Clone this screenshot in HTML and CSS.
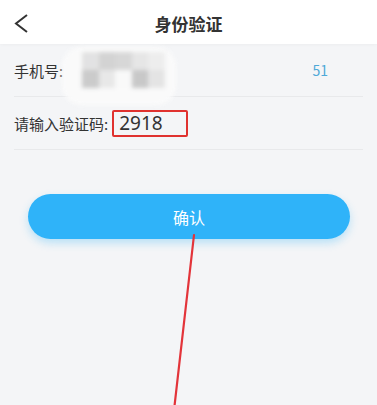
FILE: index.html
```html
<!DOCTYPE html>
<html lang="zh-CN">
<head>
    <meta charset="UTF-8">
    <meta name="viewport" content="width=device-width, initial-scale=1.0">
    <title>身份验证</title>
    <link rel="stylesheet" href="styles.css">
</head>
<body>
    <div class="header">
        <svg class="back" width="44" height="44" viewBox="0 0 44 44">
            <polyline points="27,15 16,23.5 27,32" fill="none" stroke="#333" stroke-width="2" stroke-linejoin="miter"/>
        </svg>
        <div class="title">身份验证</div>
        <div></div>
    </div>

    <div class="form">
        <div class="row phone">
            <span class="label">手机号:</span>
            <div class="mosaic">
                <span class="b1"></span><span class="b2"></span><span class="b3"></span><span class="b4"></span><span class="b5"></span>
                <span class="b6"></span><span class="b7"></span><span class="b8"></span><span class="b9"></span><span class="b10"></span>
            </div>
            <span class="tail">51</span>
        </div>
        <div class="row">
            <span class="label">请输入验证码:</span>
            <span class="code">2918</span>
        </div>
    </div>

    <div class="actions">
        <button class="confirm">确认</button>
    </div>

    <!-- 标注箭头线 -->
    <svg class="mark" width="377" height="405" viewBox="0 0 377 405">
        <line x1="194" y1="235" x2="174.5" y2="406" stroke="#e3343a" stroke-width="2.2" stroke-linecap="round"/>
    </svg>
</body>
</html>
```

FILE: styles.css
```css
html, body {
    margin: 0;
    padding: 0;
}
body {
    font-family: "Noto Sans CJK SC", "Noto Sans", sans-serif;
    background: #f4f5f7;
    width: 377px;
    height: 405px;
    overflow: hidden;
    position: relative;
    color: #333;
}
.header {
    height: 44px;
    background: #fff;
    display: grid;
    grid-template-columns: 44px 1fr 44px;
    align-items: center;
    box-shadow: 0 1px 3px rgba(0, 0, 0, 0.03);
}
.back {
    display: block;
}
.title {
    text-align: center;
    font-size: 17px;
    font-weight: bold;
    color: #333;
    line-height: 40px;
    padding-top: 4px;
}
.form {
    padding: 0 14px;
}
.row {
    height: 52px;
    display: flex;
    align-items: center;
    border-bottom: 1px solid #e8e9eb;
    position: relative;
}
.label {
    font-size: 15px;
    color: #333;
}
.tail {
    margin-left: auto;
    margin-right: 35px;
    font-size: 14px;
    color: #4ea9d8;
}
.mosaic {
    position: absolute;
    left: 48px;
    top: 3px;
    width: 114px;
    height: 58px;
    background: #fbfbfb;
    border-radius: 20px;
    display: grid;
    grid-template-columns: repeat(5, 16.5px);
    grid-template-rows: 18px 18px;
    padding: 5px 0 0 20px;
    box-sizing: border-box;
    filter: blur(2px);
    opacity: 0.95;
}
.b1 { background: #e2e2e2; }
.b2 { background: #d2d2d2; }
.b3 { background: #d6d6d6; }
.b4 { background: #e6e6e6; }
.b5 { background: #ededed; }
.b6 { background: #c9c9c9; }
.b7 { background: #e8e8e8; }
.b8 { background: #fafafa; }
.b9 { background: #c6c6c6; }
.b10 { background: #e4e4e4; }
.code {
    margin-left: 4px;
    width: 76px;
    height: 27px;
    box-sizing: border-box;
    border: 2px solid #e0322f;
    border-radius: 2px;
    font-size: 19px;
    line-height: 23px;
    padding-left: 5px;
    color: #333;
    font-family: "Noto Sans", "Roboto", sans-serif;
}
.actions {
    padding: 44px 27px 0 28px;
}
.confirm {
    display: block;
    width: 100%;
    height: 45px;
    border: none;
    border-radius: 23px;
    background: #2fb3f9;
    color: #fff;
    font-size: 16px;
    font-family: "Noto Sans CJK SC", sans-serif;
    box-shadow: 0 4px 8px rgba(47, 179, 249, 0.3);
}
.mark {
    position: absolute;
    left: 0;
    top: 0;
    pointer-events: none;
}
```
